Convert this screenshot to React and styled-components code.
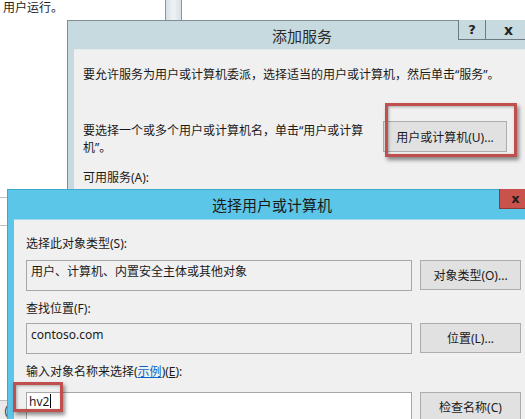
import React from "react";
import styled, { createGlobalStyle } from "styled-components";

const Global = createGlobalStyle`
  html, body { margin: 0; padding: 0; background: #ffffff; }
  body {
    font-family: "Noto Sans", "Noto Sans CJK SC", sans-serif;
    font-size: 12px;
    color: #1a1a1a;
    overflow: hidden;
  }
  * { box-sizing: border-box; }
`;

const Desktop = styled.div`
  position: relative;
  width: 525px;
  height: 419px;
  overflow: hidden;
  background: #ffffff;
`;

/* background window fragments */
const BackText = styled.div`
  position: absolute;
  left: 3px;
  top: 0px;
  font-size: 12px;
  line-height: 16px;
  color: #222;
`;

const BackScroll = styled.div`
  position: absolute;
  left: 165px;
  top: -4px;
  width: 17px;
  height: 25px;
  background: linear-gradient(90deg, #d8e0e6, #eef2f5 50%, #d8e0e6);
  border: 1px solid #8d969d;
`;

const BackRow = styled.div`
  position: absolute;
  left: -40px;
  top: ${(p) => p.$top}px;
  width: 48px;
  height: ${(p) => p.$h}px;
  border-top: 1px solid #b9bec3;
  border-bottom: 1px solid #b9bec3;
  background: ${(p) => p.$bg || "#fff"};
  font-size: 12px;
  line-height: 16px;
  padding-top: 2px;
  text-align: right;
  color: #333;
`;

/* generic window */
const Window = styled.div`
  position: absolute;
  left: ${(p) => p.$x}px;
  top: ${(p) => p.$y}px;
  width: ${(p) => p.$w}px;
  height: ${(p) => p.$h}px;
  background: ${(p) => p.$frame};
  border: 1px solid ${(p) => p.$edge};
  padding: 0 6px 6px 6px;
  display: flex;
  flex-direction: column;
`;

const TitleBar = styled.div`
  position: relative;
  height: ${(p) => p.$h}px;
  flex: none;
  display: flex;
  align-items: center;
  justify-content: center;
  font-size: 15px;
  color: ${(p) => p.$color};
`;

const TitleButtons = styled.div`
  position: absolute;
  top: -1px;
  right: ${(p) => p.$right}px;
  display: flex;
`;

const CaptionButton = styled.div`
  width: ${(p) => p.$w}px;
  height: 20px;
  display: flex;
  align-items: center;
  justify-content: center;
  background: ${(p) => p.$bg};
  border: 1px solid ${(p) => p.$border};
  border-top: none;
  margin-left: -1px;
  font-family: "DejaVu Sans", sans-serif;
  font-weight: bold;
  font-size: ${(p) => p.$fs || 13}px;
  color: ${(p) => p.$color || "#222"};
`;

const Client = styled.div`
  flex: 1;
  background: #f0f0f0;
  border-top: 1px solid ${(p) => p.$line || "#e6eaec"};
  padding: ${(p) => p.$pad};
  display: flex;
  flex-direction: column;
`;

const Para = styled.div`
  line-height: ${(p) => p.$lh || 16}px;
  margin-top: ${(p) => p.$mt || 0}px;
  white-space: nowrap;
`;

const SplitRow = styled.div`
  display: grid;
  grid-template-columns: 300px auto;
  align-items: start;
  margin-top: ${(p) => p.$mt || 0}px;
`;

const Button = styled.div`
  width: ${(p) => p.$w}px;
  height: ${(p) => p.$h || 31}px;
  background: #e1e1e1;
  border: 1px solid #adadad;
  display: flex;
  align-items: center;
  justify-content: center;
  font-size: 12px;
  color: #1a1a1a;
  white-space: nowrap;
`;

const FieldRow = styled.div`
  display: grid;
  grid-template-columns: 386px 101px;
  column-gap: 8px;
  margin-top: ${(p) => p.$mt || 0}px;
`;

const Field = styled.div`
  height: ${(p) => p.$h || 31}px;
  background: ${(p) => (p.$white ? "#ffffff" : "#f0f0f0")};
  border: 1px solid #a7a7a7;
  padding: ${(p) => p.$pt || 3}px 4px 0 ${(p) => p.$pl || 4}px;
  line-height: 16px;
  white-space: nowrap;
`;

const Caret = styled.span`
  display: inline-block;
  width: 1px;
  height: 14px;
  background: #000;
  vertical-align: -2px;
  margin-left: 1px;
`;

const LinkText = styled.span`
  color: #0a64c8;
  text-decoration: underline;
`;

const Accel = styled.span`
  text-decoration: underline;
`;

const Highlight = styled.div`
  position: absolute;
  left: ${(p) => p.$x}px;
  top: ${(p) => p.$y}px;
  width: ${(p) => p.$w}px;
  height: ${(p) => p.$h}px;
  border: 3px solid #c0504d;
  box-shadow: 2px 3px 4px rgba(0, 0, 0, 0.45),
    inset 1px 1px 3px rgba(0, 0, 0, 0.3);
  pointer-events: none;
`;

export default function App() {
  return (
    <>
      <Global />
      <Desktop>
        <BackText>用户运行。</BackText>
        <BackScroll />
        <BackRow $top={197} $h={29} />
        <BackRow $top={400} $h={30} $bg="#e9e9e9">(</BackRow>

        <Window $x={67} $y={20} $w={470} $h={420} $frame="#c6dadf" $edge="#7f8c93">
          <TitleBar $h={28} $color="#2b2b2b">
            添加服务
            <TitleButtons $right={-2}>
              <CaptionButton $w={28} $bg="#c6dadf" $border="#6d7a81">?</CaptionButton>
              <CaptionButton $w={47} $bg="#c6dadf" $border="#6d7a81" $fs={14}>x</CaptionButton>
            </TitleButtons>
          </TitleBar>
          <Client $pad="17px 9px 0 9px">
            <Para>要允许服务为用户或计算机委派，选择适当的用户或计算机，然后单击“服务”。</Para>
            <SplitRow $mt={38}>
              <Para $lh={17} $mt={1}>
                要选择一个或多个用户或计算机名，单击“用户或计算
                <br />
                机”。
              </Para>
              <Button $w={124} $h={31}>用户或计算机(U)...</Button>
            </SplitRow>
            <Para $mt={14}>可用服务(A):</Para>
          </Client>
        </Window>

        <Window $x={7} $y={189} $w={530} $h={260} $frame="#5cc6e9" $edge="#3ea9cf">
          <TitleBar $h={29} $color="#1a1a1a">
            选择用户或计算机
            <TitleButtons $right={-2}>
              <CaptionButton $w={33} $bg="#c9524c" $border="#8f3a36" $fs={13} $color="#1e1e1e">x</CaptionButton>
            </TitleButtons>
          </TitleBar>
          <Client $pad="16px 12px 0 12px" $line="#9fd9ee">
            <Para>选择此对象类型(S):</Para>
            <FieldRow $mt={8}>
              <Field>用户、计算机、内置安全主体或其他对象</Field>
              <Button $w={101} $h={30}>对象类型(O)...</Button>
            </FieldRow>
            <Para $mt={10}>查找位置(F):</Para>
            <FieldRow $mt={6}>
              <Field>contoso.com</Field>
              <Button $w={101} $h={30}>位置(L)...</Button>
            </FieldRow>
            <Para $mt={10}>
              输入对象名称来选择(<LinkText>示例</LinkText>)(<Accel>E</Accel>):
            </Para>
            <FieldRow $mt={12}>
              <Field $white $h={40} $pt={1} $pl={2}>
                hv2
                <Caret />
              </Field>
              <Button $w={101} $h={30}>检查名称(C)</Button>
            </FieldRow>
          </Client>
        </Window>

        <Highlight $x={385} $y={103} $w={132} $h={54} />
        <Highlight $x={13} $y={382} $w={50} $h={30} />
      </Desktop>
    </>
  );
}
